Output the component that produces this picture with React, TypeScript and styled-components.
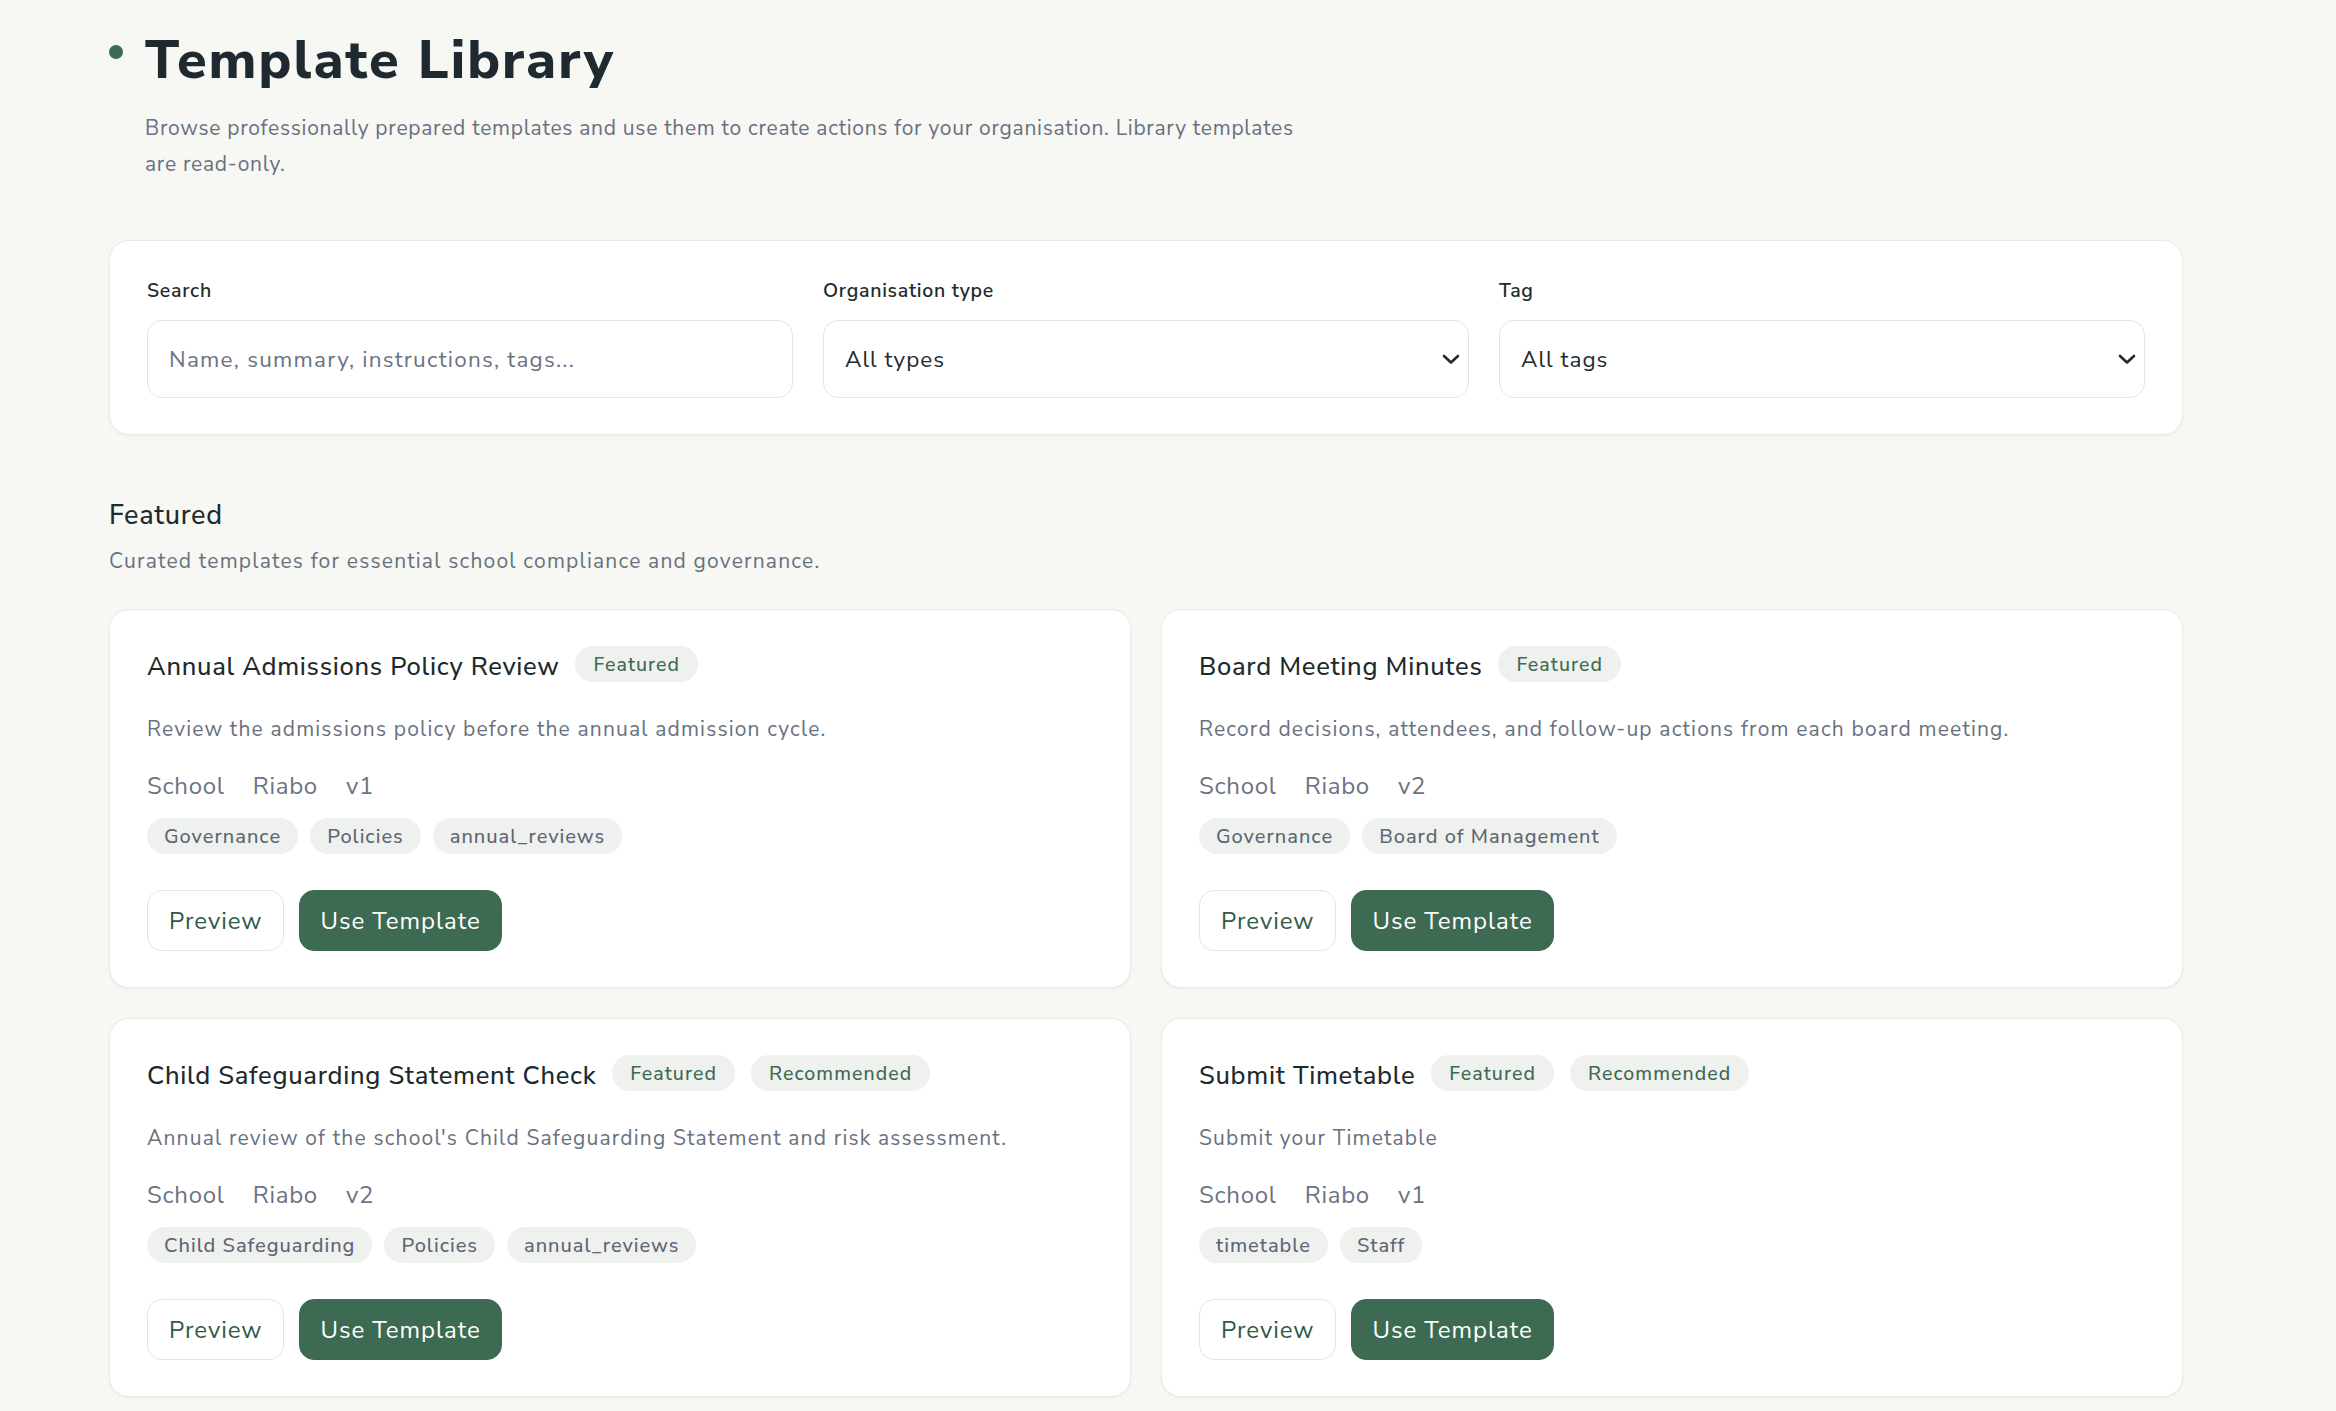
import React from 'react';
import styled, { createGlobalStyle } from 'styled-components';

interface Template {
	title: string;
	badges: string[];
	summary: string;
	orgType: string;
	owner: string;
	version: string;
	tags: string[];
}

const templates: Template[] = [
	{
		title: 'Annual Admissions Policy Review',
		badges: ['Featured'],
		summary: 'Review the admissions policy before the annual admission cycle.',
		orgType: 'School',
		owner: 'Riabo',
		version: 'v1',
		tags: ['Governance', 'Policies', 'annual_reviews'],
	},
	{
		title: 'Board Meeting Minutes',
		badges: ['Featured'],
		summary: 'Record decisions, attendees, and follow-up actions from each board meeting.',
		orgType: 'School',
		owner: 'Riabo',
		version: 'v2',
		tags: ['Governance', 'Board of Management'],
	},
	{
		title: 'Child Safeguarding Statement Check',
		badges: ['Featured', 'Recommended'],
		summary: "Annual review of the school's Child Safeguarding Statement and risk assessment.",
		orgType: 'School',
		owner: 'Riabo',
		version: 'v2',
		tags: ['Child Safeguarding', 'Policies', 'annual_reviews'],
	},
	{
		title: 'Submit Timetable',
		badges: ['Featured', 'Recommended'],
		summary: 'Submit your Timetable',
		orgType: 'School',
		owner: 'Riabo',
		version: 'v1',
		tags: ['timetable', 'Staff'],
	},
];

const GlobalStyle = createGlobalStyle`
	* {
		box-sizing: border-box;
	}
	body {
		margin: 0;
		background: #f7f7f4;
		font-family: 'Nunito Sans', Lato, 'Open Sans', sans-serif;
		letter-spacing: 0.045em;
		color: #1f2a2c;
	}
`;

const Page = styled.main`
	width: 2183px;
	padding: 28px 0 40px 109px;
`;

const Header = styled.header`
	display: flex;
	gap: 22px;
	.header_dot {
		width: 14px;
		height: 14px;
		border-radius: 50%;
		background: #3d6a52;
		margin-top: 17px;
		flex-shrink: 0;
	}
	h1 {
		margin: 0;
		font-size: 54px;
		line-height: 65px;
		font-weight: 800;
		color: #1e2a30;
		letter-spacing: 2px;
	}
	p {
		margin: 17px 0 0;
		max-width: 1170px;
		font-size: 21px;
		line-height: 36px;
		color: #68717f;
	}
`;

const FilterCard = styled.section`
	margin-top: 58px;
	background: #fff;
	border: 1px solid #e9ebe7;
	border-radius: 20px;
	box-shadow: 0 1px 3px rgba(20, 30, 25, 0.05);
	padding: 36px 37px;
	display: grid;
	grid-template-columns: repeat(3, 1fr);
	gap: 30px;
`;

const Field = styled.label`
	display: flex;
	flex-direction: column;
	gap: 15px;
	span {
		font-size: 19.5px;
		line-height: 28px;
		font-weight: 600;
		color: #1f2d2b;
	}
`;

const InputBox = styled.div<{ $placeholder?: boolean }>`
	height: 78px;
	border: 1px solid #e4e6e2;
	border-radius: 15px;
	background: #fff;
	display: flex;
	align-items: center;
	justify-content: space-between;
	padding: 0 8px 0 21px;
	font-size: 22.5px;
	letter-spacing: ${(props) => (props.$placeholder ? '0.055em' : '0.045em')};
	color: ${(props) => (props.$placeholder ? '#6b7383' : '#1f2a2c')};
`;

const SectionHead = styled.div`
	margin-top: 63px;
	h2 {
		margin: 0;
		font-size: 27px;
		line-height: 36px;
		font-weight: 500;
		color: #1f2a2c;
	}
	p {
		margin: 11px 0 0;
		font-size: 21px;
		line-height: 32px;
		color: #68717f;
		letter-spacing: 0.057em;
	}
`;

const Grid = styled.div`
	margin-top: 32px;
	display: grid;
	grid-template-columns: 1fr 1fr;
	gap: 30px;
`;

const CardComponent = styled.article`
	background: #fff;
	border: 1px solid #e9ebe7;
	border-radius: 20px;
	box-shadow: 0 1px 3px rgba(20, 30, 25, 0.05);
	padding: 36px 37px;
	display: flex;
	flex-direction: column;
	.card_title-row {
		display: flex;
		align-items: center;
		gap: 16px;
		height: 36px;
	}
	.card_title {
		font-size: 25.5px;
		font-weight: 500;
		color: #1d2a2c;
		margin-top: 4px;
	}
	.card_summary {
		margin-top: 31px;
		font-size: 21px;
		line-height: 32px;
		color: #68717f;
		letter-spacing: 0.056em;
	}
	.card_meta {
		margin-top: 23px;
		display: flex;
		gap: 28px;
		font-size: 24px;
		line-height: 36px;
		color: #6b7383;
	}
	.card_tags {
		margin-top: 14px;
		display: flex;
		gap: 12px;
	}
	.card_actions {
		margin-top: 36px;
		display: flex;
		gap: 15px;
	}
`;

const Badge = styled.span`
	height: 36px;
	padding: 0 18px;
	border-radius: 18px;
	background: #eef1ed;
	color: #3d6a52;
	font-size: 19.5px;
	font-weight: 500;
	letter-spacing: 0.055em;
	display: inline-flex;
	align-items: center;
`;

const Tag = styled.span`
	height: 36px;
	padding: 0 17px;
	border-radius: 18px;
	background: #eff1ee;
	color: #5d6675;
	font-size: 20px;
	font-weight: 500;
	letter-spacing: 0.05em;
	display: inline-flex;
	align-items: center;
`;

const Button = styled.button<{ $primary?: boolean }>`
	height: 61px;
	padding: 0 ${(props) => (props.$primary ? '20px' : '21px')};
	border-radius: 15px;
	font-family: inherit;
	font-size: 24px;
	letter-spacing: 0.04em;
	cursor: pointer;
	border: 1px solid ${(props) => (props.$primary ? '#3d6a52' : '#e4e6e2')};
	background: ${(props) => (props.$primary ? '#3d6a52' : '#fff')};
	color: ${(props) => (props.$primary ? '#fff' : '#2f5b45')};
`;

const Chevron = () => (
	<svg width="18" height="12" viewBox="0 0 18 12" fill="none">
		<path d="M2 3l7 6.5L16 3" stroke="#1f2a2c" strokeWidth="2.6" strokeLinecap="round" strokeLinejoin="round" />
	</svg>
);

const TemplateCard = ({ template }: { template: Template }) => (
	<CardComponent>
		<div className="card_title-row">
			<span className="card_title">{template.title}</span>
			{template.badges.map((badge) => (
				<Badge key={badge}>{badge}</Badge>
			))}
		</div>
		<div className="card_summary">{template.summary}</div>
		<div className="card_meta">
			<span>{template.orgType}</span>
			<span>{template.owner}</span>
			<span>{template.version}</span>
		</div>
		<div className="card_tags">
			{template.tags.map((tag, key) => (
				<Tag key={`tag_${key}`}>{tag}</Tag>
			))}
		</div>
		<div className="card_actions">
			<Button>Preview</Button>
			<Button $primary>Use Template</Button>
		</div>
	</CardComponent>
);

export default function App() {
	return (
		<>
			<GlobalStyle />
			<Page>
				<Header>
					<div className="header_dot" />
					<div>
						<h1>Template Library</h1>
						<p>
							Browse professionally prepared templates and use them to create actions for your
							organisation. Library templates are read-only.
						</p>
					</div>
				</Header>
				<FilterCard>
					<Field>
						<span>Search</span>
						<InputBox $placeholder>Name, summary, instructions, tags...</InputBox>
					</Field>
					<Field>
						<span>Organisation type</span>
						<InputBox>
							All types
							<Chevron />
						</InputBox>
					</Field>
					<Field>
						<span>Tag</span>
						<InputBox>
							All tags
							<Chevron />
						</InputBox>
					</Field>
				</FilterCard>
				<SectionHead>
					<h2>Featured</h2>
					<p>Curated templates for essential school compliance and governance.</p>
				</SectionHead>
				<Grid>
					{templates.map((template) => (
						<TemplateCard key={template.title} template={template} />
					))}
				</Grid>
			</Page>
		</>
	);
}
